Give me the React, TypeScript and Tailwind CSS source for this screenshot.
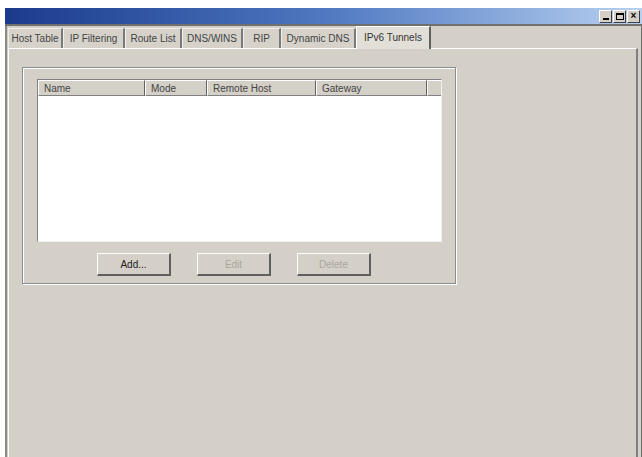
import React from "react";

const tabs = [
  { label: "Host Table", w: 55 },
  { label: "IP Filtering", w: 62 },
  { label: "Route List", w: 57 },
  { label: "DNS/WINS", w: 61 },
  { label: "RIP", w: 38 },
  { label: "Dynamic DNS", w: 75 },
];

const cols = [
  { label: "Name", w: 107 },
  { label: "Mode", w: 62 },
  { label: "Remote Host", w: 109 },
  { label: "Gateway", w: 111 },
];

function TitleBtn({ children }: { children: React.ReactNode }) {
  return (
    <div className="w-[13px] h-[13px] bg-[#d4d0c8] border-t border-l border-t-white border-l-white border-b border-r border-b-[#404040] border-r-[#404040] flex items-center justify-center text-[9px] leading-none text-black font-bold">
      {children}
    </div>
  );
}

function Btn({ label, disabled }: { label: string; disabled?: boolean }) {
  return (
    <div className="w-[74px] h-[23px] bg-[#d4d0c8] border-t border-l border-t-white border-l-white border-b-2 border-r-2 border-b-[#606060] border-r-[#606060] flex items-center justify-center text-[10px]">
      <span className={disabled ? "text-[#aaa69e]" : "text-[#222]"}>{label}</span>
    </div>
  );
}

export default function App() {
  return (
    <div
      className="w-[642px] h-[457px] bg-white overflow-hidden flex flex-col pt-[8px] pl-[5px]"
      style={{ fontFamily: '"Liberation Sans", Arial, sans-serif' }}
    >
      {/* title bar */}
      <div className="h-[16px] bg-linear-to-r from-[#1c3a8c] via-[#4f78c0] to-[#b8d0f0] flex items-center justify-end pr-[2px] gap-[1px] shrink-0">
        <TitleBtn>
          <span className="mt-[6px] block w-[6px] h-[2px] bg-black" />
        </TitleBtn>
        <TitleBtn>
          <span className="block w-[8px] h-[7px] border border-black border-t-2" />
        </TitleBtn>
        <TitleBtn>
          <span className="text-[10px]">×</span>
        </TitleBtn>
      </div>
      <div className="h-[2px] bg-[#707070] shrink-0" />
      {/* window body */}
      <div className="flex-1 flex flex-col bg-[#d4d0c8] border-l-2 border-l-[#8a8a8a] border-r border-r-[#707070] pl-[1px] pr-[3px] min-h-0">
        {/* tabs */}
        <div className="h-[22px] flex items-end shrink-0">
          {tabs.map((t) => (
            <div
              key={t.label}
              style={{ width: t.w }}
              className="h-[20px] border-t border-l border-t-[#eeeeee] border-l-[#eeeeee] border-r-2 border-r-[#7a7a7a] flex items-center justify-center text-[10px] text-[#444] bg-[#d6d2ca]"
            >
              {t.label}
            </div>
          ))}
          <div className="w-[75px] h-[23px] -mb-[1px] relative z-10 bg-[#e2dfd8] border-t border-l border-t-white border-l-white border-r-2 border-r-[#606060] flex items-start justify-center pt-[3px] text-[10px] text-[#333]">
            IPv6 Tunnels
          </div>
        </div>
        {/* panel */}
        <div className="flex-1 border-t border-l border-t-white border-l-white border-r-2 border-r-[#808080] pl-[13px] pt-[18px]">
          {/* group box */}
          <div className="w-[434px] h-[217px] border border-[#8c8c8c] shadow-[inset_1px_1px_0_#ffffff,1px_1px_0_#ffffff] pl-[14px] pt-[11px] flex flex-col">
            {/* list view */}
            <div className="w-[405px] h-[163px] bg-white border-t border-l border-t-[#808080] border-l-[#808080] border-b border-r border-b-[#f0f0f0] border-r-[#f0f0f0] flex flex-col">
              <div className="h-[16px] flex bg-[#d4d0c8]">
                {cols.map((c) => (
                  <div
                    key={c.label}
                    style={{ width: c.w }}
                    className="h-full border-t border-l border-t-white border-l-white border-r border-b border-r-[#606060] border-b-[#808080] flex items-center pl-[5px] text-[10px] text-[#444]"
                  >
                    {c.label}
                  </div>
                ))}
                <div className="flex-1 h-full border-t border-l border-t-white border-l-white border-b border-b-[#808080]" />
              </div>
            </div>
            {/* buttons */}
            <div className="flex gap-[26px] pl-[60px] mt-[11px]">
              <Btn label="Add..." />
              <Btn label="Edit" disabled />
              <Btn label="Delete" disabled />
            </div>
          </div>
        </div>
      </div>
    </div>
  );
}
